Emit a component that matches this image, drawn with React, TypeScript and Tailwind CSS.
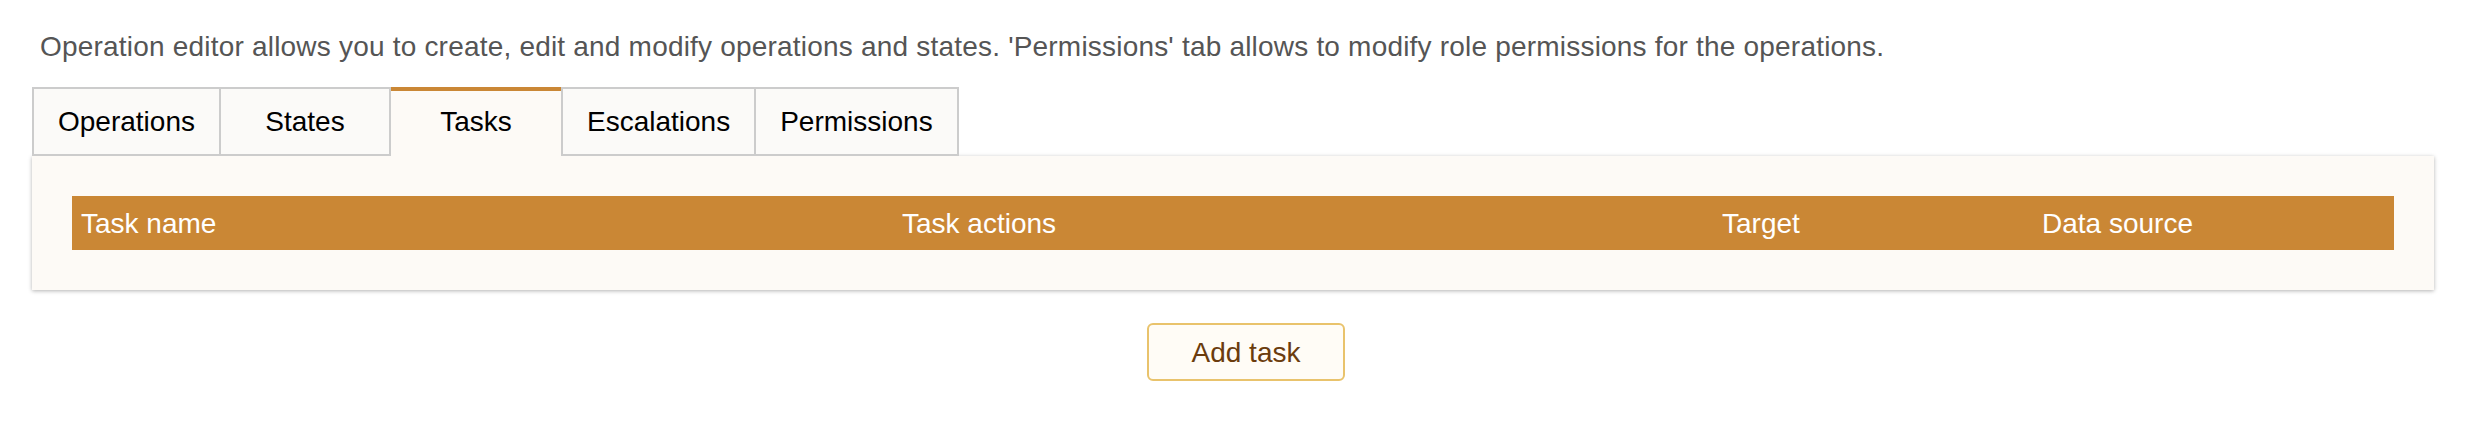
const tabs = ['Operations', 'States', 'Tasks', 'Escalations', 'Permissions'];
const active = 'Tasks';

const columns = [
  { label: 'Task name', width: 'w-[821px]' },
  { label: 'Task actions', width: 'w-[820px]' },
  { label: 'Target', width: 'w-[320px]' },
  { label: 'Data source', width: 'flex-1' },
];

const App = () => {
  return (
    <div className="min-h-[436px] bg-white font-['Liberation_Sans',Arial,sans-serif] text-[28px]">
      <div className="pl-[32px] pr-[48px] pt-[27px]">
        {/* Intro */}
        <p className="ml-[8px] leading-[40px] tracking-[0.2px] text-[#555555]">
          Operation editor allows you to create, edit and modify operations and states. 'Permissions' tab allows to modify role permissions for the operations.
        </p>

        {/* Tabs */}
        <div className="relative z-10 mt-[20px] flex">
          {tabs.map((tab, i) => {
            const isActive = tab === active;
            const prevActive = i > 0 && tabs[i - 1] === active;
            if (isActive) {
              return (
                <div
                  key={tab}
                  className="min-w-[170px] border-t-4 border-[#ca8735] bg-[#fdfaf6] px-[24px] pt-[11px] pb-[14px] text-center leading-[40px] text-black"
                >
                  {tab}
                </div>
              );
            }
            return (
              <div
                key={tab}
                className={`min-w-[170px] border-y-2 border-r-2 border-[#cccccc] bg-[#fbfaf8] px-[24px] pt-[13px] pb-[12px] text-center leading-[40px] text-black ${
                  i === 0 || prevActive ? 'border-l-2' : ''
                }`}
              >
                {tab}
              </div>
            );
          })}
        </div>

        {/* Panel */}
        <div className="bg-[#fdfaf6] p-[40px] shadow-[0_1px_4px_rgba(0,0,0,0.3)]">
          <div className="flex bg-[#ca8735] pt-[2px] leading-[52px] text-white">
            {columns.map((col) => (
              <div key={col.label} className={`${col.width} px-[9px]`}>
                {col.label}
              </div>
            ))}
          </div>
        </div>
      </div>

      {/* Add task */}
      <div className="mt-[33px] flex justify-center pl-[10px]">
        <button className="w-[198px] rounded-[6px] border-2 border-[#e9c36c] bg-[#fffcf6] pt-[8px] pb-[6px] text-center leading-[40px] text-[#6b3c0e]">
          Add task
        </button>
      </div>
    </div>
  );
};

export default App;
